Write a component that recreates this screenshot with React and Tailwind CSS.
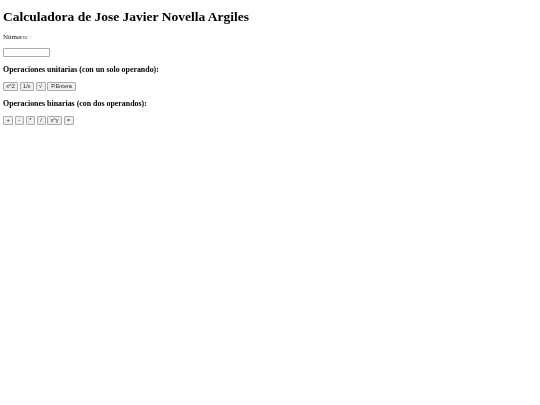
const unarias = [
  ['x^2', 'w-[15px]'],
  ['1/x', 'w-[14.5px]'],
  ['√', 'w-[10px]'],
  ['P.Entera', 'w-[29px]'],
];
const binarias = [
  ['+', 'w-[10px]'],
  ['-', 'w-[9.5px]'],
  ['*', 'w-[9.5px]'],
  ['/', 'w-[9px]'],
  ['x^y', 'w-[15px]'],
  ['=', 'w-[10px]'],
];

const Boton = ({ ancho, children }) => (
  <button className={`${ancho} h-[9px] p-0 bg-[#efefef] border border-[#aaaaaa] rounded-[1px] text-[5.5px] leading-none text-[#222] font-['Liberation_Sans',sans-serif]`}>
    {children}
  </button>
);

export default function App() {
  return (
    <div className="min-h-[405px] bg-white">
      <div className="pl-[3px] pt-[9px] text-black font-['Liberation_Serif',serif] will-change-transform">
        <h1 className="text-[13.5px] leading-[15px] font-bold">Calculadora de Jose Javier Novella Argiles</h1>
        <p className="mt-[9px] text-[7px] leading-[8px] text-[#222]">Número:</p>
        <input type="text" className="mt-[7px] block w-[47px] h-[9px] bg-white border border-[#aaaaaa] rounded-[1px]" />
        <h3 className="mt-[8px] text-[7.9px] leading-[9px] font-bold">Operaciones unitarias (con un solo operando):</h3>
        <div className="mt-[8px] flex gap-[1.5px]">
          {unarias.map(([op, ancho]) => <Boton key={op} ancho={ancho}>{op}</Boton>)}
        </div>
        <h3 className="mt-[8px] text-[7.9px] leading-[9px] font-bold">Operaciones binarias (con dos operandos):</h3>
        <div className="mt-[8px] flex gap-[1.5px]">
          {binarias.map(([op, ancho]) => <Boton key={op} ancho={ancho}>{op}</Boton>)}
        </div>
      </div>
    </div>
  );
}
